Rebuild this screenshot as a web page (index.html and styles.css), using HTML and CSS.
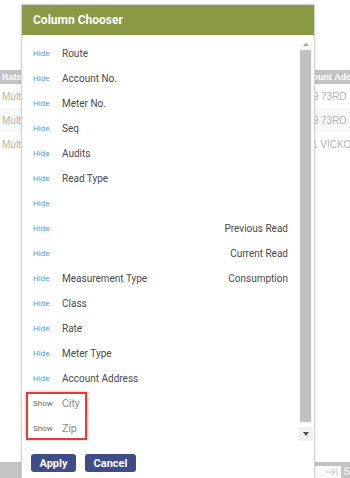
FILE: index.html
```html
<!DOCTYPE html>
<html>
<head>
<meta charset="utf-8">
<link rel="stylesheet" href="styles.css">
</head>
<body>
<div class="page">
  <div class="top-space"></div>
  <div class="trow thead">
    <div class="c1">Rate</div>
    <div class="c2">Account Address</div>
  </div>
  <div class="trow">
    <div class="c1">Multi</div>
    <div class="c2">1419 73RD LN</div>
  </div>
  <div class="trow alt">
    <div class="c1">Multi</div>
    <div class="c2">1419 73RD LN</div>
  </div>
  <div class="trow">
    <div class="c1">Multi</div>
    <div class="c2">1101 VICKORY</div>
  </div>
  <div class="filler"></div>
  <div class="footer">
    <div class="f-left"></div>
    <div class="f-right">
      <div class="f-bar"></div>
      <div class="pager">
        <div class="pg-btn"><svg width="14" height="10" viewBox="0 0 14 10"><path d="M1 5h9M7 2l3 3-3 3M12 1v8" stroke="#d6d6d6" stroke-width="1.3" fill="none"/></svg></div>
        <div class="pg-text">S</div>
      </div>
    </div>
  </div>
</div>

<div class="dialog">
  <div class="dlg-head">Column Chooser</div>
  <div class="dlg-body">
    <div class="list">
      <div class="row"><span class="tog">Hide</span><span class="lbl">Route</span></div>
      <div class="row"><span class="tog">Hide</span><span class="lbl">Account No.</span></div>
      <div class="row"><span class="tog">Hide</span><span class="lbl">Meter No.</span></div>
      <div class="row"><span class="tog">Hide</span><span class="lbl">Seq</span></div>
      <div class="row"><span class="tog">Hide</span><span class="lbl">Audits</span></div>
      <div class="row"><span class="tog">Hide</span><span class="lbl">Read Type</span></div>
      <div class="row"><span class="tog">Hide</span><span class="lbl"></span></div>
      <div class="row"><span class="tog">Hide</span><span class="lbl"></span><span class="rlbl">Previous Read</span></div>
      <div class="row"><span class="tog">Hide</span><span class="lbl"></span><span class="rlbl">Current Read</span></div>
      <div class="row"><span class="tog">Hide</span><span class="lbl">Measurement Type</span><span class="rlbl">Consumption</span></div>
      <div class="row"><span class="tog">Hide</span><span class="lbl">Class</span></div>
      <div class="row"><span class="tog">Hide</span><span class="lbl">Rate</span></div>
      <div class="row"><span class="tog">Hide</span><span class="lbl">Meter Type</span></div>
      <div class="row"><span class="tog">Hide</span><span class="lbl">Account Address</span></div>
      <div class="hl">
        <div class="row off"><span class="tog">Show</span><span class="lbl">City</span></div>
        <div class="row off"><span class="tog">Show</span><span class="lbl">Zip</span></div>
      </div>
    </div>
    <div class="sbar">
      <div class="sb-up"><span class="tri-up"></span></div>
      <div class="sb-thumb"></div>
      <div class="sb-gap"></div>
      <div class="sb-down"><span class="tri-down"></span></div>
    </div>
  </div>
  <div class="dlg-foot">
    <button class="btn apply">Apply</button>
    <button class="btn cancel">Cancel</button>
  </div>
</div>
</body>
</html>
```

FILE: styles.css
```css
html, body {
  margin: 0;
  padding: 0;
  width: 350px;
  height: 478px;
  overflow: hidden;
  background: #fff;
}

.page {
  display: flex;
  flex-direction: column;
  height: 478px;
  font-family: "Liberation Sans", Arial, sans-serif;
  font-size: 10px;
}

.top-space { height: 70px; }

.trow {
  display: grid;
  grid-template-columns: 296px 1fr;
  height: 24px;
  align-items: center;
  color: #b4b4b4;
  white-space: nowrap;
  overflow: hidden;
}
.trow.alt { background: #f7f7f7; }
.trow .c1 { padding-left: 2px; overflow: hidden; }
.trow .c2 { padding-left: 0; }

.thead {
  height: 14px;
  background: #c3c3c3;
  color: #fff;
  font-weight: 700;
  font-size: 9px;
}

.filler { flex: 1; }

.footer {
  height: 16px;
  display: flex;
}
.f-left {
  width: 21px;
  background: #c3c3c3;
}
.f-right {
  flex: 1;
  display: flex;
  flex-direction: column;
}
.f-bar { height: 4px; background: #c3c3c3; }
.pager {
  flex: 1;
  display: flex;
  background: #c3c3c3;
  padding-left: 292px;
}
.pg-btn {
  width: 27px;
  background: #fafafa;
  display: flex;
  align-items: center;
  justify-content: flex-end;
  padding-right: 2px;
}
.pg-text {
  color: #eee;
  font-weight: 700;
  font-size: 10px;
  padding-left: 2px;
  line-height: 12px;
}

.dialog {
  position: absolute;
  left: 21px;
  top: 4px;
  width: 292px;
  height: 480px;
  background: #fff;
  border: 1px solid #d4d4d4;
  box-shadow: 0 0 3px rgba(0,0,0,0.12);
  font-family: Roboto, "Noto Sans", sans-serif;
  display: flex;
  flex-direction: column;
}

.dlg-head {
  height: 30px;
  background: #8a9946;
  color: #fff;
  font-weight: 700;
  font-size: 12px;
  display: flex;
  align-items: center;
  padding-left: 11px;
}

.dlg-body {
  display: flex;
  height: 406px;
}

.list {
  width: 277px;
  padding-top: 6px;
  overflow: hidden;
}

.row {
  height: 25px;
  display: flex;
  align-items: center;
  padding-left: 11px;
  padding-right: 11px;
}
.tog {
  width: 29px;
  font-size: 8px;
  color: #5f96cb;
}
.lbl {
  font-size: 10px;
  color: #4a4a4a;
}
.rlbl {
  margin-left: auto;
  font-size: 10px;
  color: #4a4a4a;
}
.row.off .tog { color: #6c6c6c; }
.row.off .lbl { color: #8c8c8c; font-size: 10.5px; }

.hl { position: relative; }
.hl::before {
  content: "";
  position: absolute;
  left: 4px;
  top: 1px;
  width: 57px;
  height: 44px;
  border: 2px solid #e8383b;
  box-shadow: 0 0 3px rgba(0,0,0,0.3);
}

.sbar {
  width: 14px;
  margin-top: 3px;
  display: flex;
  flex-direction: column;
}
.sb-up {
  height: 12px;
  display: flex;
  justify-content: center;
  align-items: center;
}
.tri-up {
  width: 0; height: 0;
  border-left: 3px solid transparent;
  border-right: 3px solid transparent;
  border-bottom: 3px solid #a0a0a0;
}
.sb-thumb {
  height: 372px;
  margin-left: 1px;
  margin-right: 2px;
  background: #c1c1c1;
}
.sb-gap { height: 5px; }
.sb-down {
  height: 14px;
  background: #f1f1f1;
  display: flex;
  justify-content: center;
  align-items: center;
}
.tri-down {
  width: 0; height: 0;
  border-left: 3.5px solid transparent;
  border-right: 3.5px solid transparent;
  border-top: 4px solid #505050;
}

.dlg-foot {
  display: flex;
  gap: 9px;
  padding-left: 9px;
  padding-top: 13px;
}
.btn {
  height: 18px;
  border: none;
  border-radius: 3px;
  background: #3f4c8a;
  color: #fff;
  font-family: Roboto, sans-serif;
  font-weight: 700;
  font-size: 11px;
  padding: 0;
}
.btn.apply { width: 45px; }
.btn.cancel { width: 51px; }
```
